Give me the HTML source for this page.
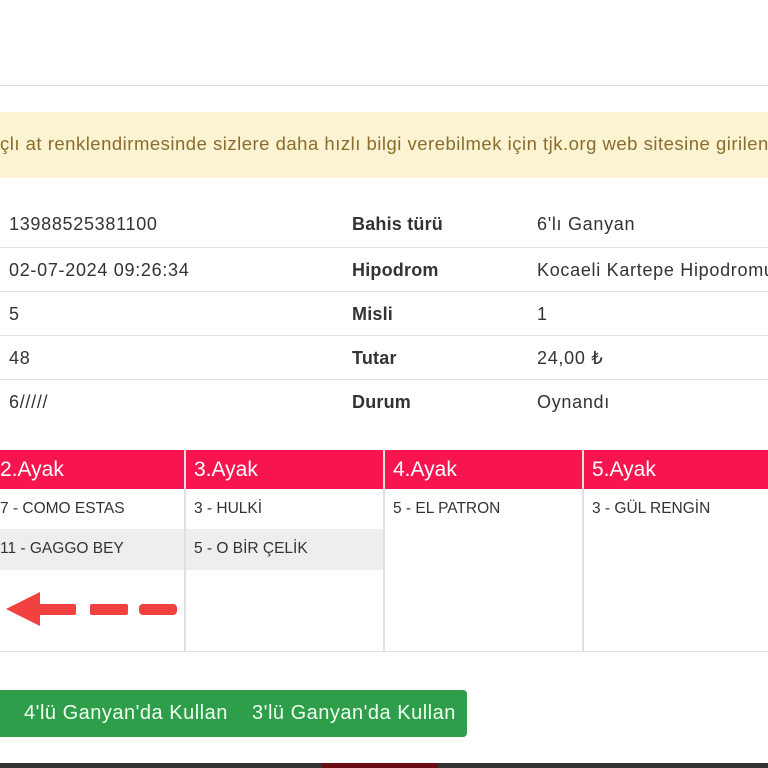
<!DOCTYPE html>
<html><head><meta charset="utf-8"><style>
body{margin:0;width:768px;height:768px;overflow:hidden;background:#fff;font-family:"Liberation Sans",sans-serif;position:relative;color:#333}
.a{position:absolute}
.row{position:absolute;left:0;width:768px;border-top:1px solid #e2e2e2;height:44px}
.row span{position:absolute;top:12px;font-size:18px;color:#333;white-space:nowrap;letter-spacing:0.7px}
.b{font-weight:bold;letter-spacing:0.2px!important}
.col{position:absolute;top:450px;height:201px;border-right:2px solid #e0e0e0}
.hd{height:39px;background:#f8154f;color:#fff;font-size:21px;line-height:39px;padding-left:8px;white-space:nowrap;overflow:hidden}
.it{height:40px;line-height:40px;font-size:15.5px;padding-left:8px;color:#333;white-space:nowrap;overflow:hidden}
</style></head><body>
<div class="a" style="left:0;top:85px;width:768px;height:1px;background:#ddd"></div>
<div class="a" style="left:0;top:112px;width:768px;height:66px;background:#fcf3d2"></div>
<div class="a" style="left:0;top:133px;font-size:18.5px;letter-spacing:0.5px;color:#8a6d2e;white-space:nowrap">çlı at renklendirmesinde sizlere daha hızlı bilgi verebilmek için tjk.org web sitesine girilen</div>
<div class="row" style="top:202px;border-top:none"><span style="left:9px">13988525381100</span><span class="b" style="left:352px">Bahis türü</span><span style="left:537px">6'lı Ganyan</span></div>
<div class="row" style="top:247px"><span style="left:9px">02-07-2024 09:26:34</span><span class="b" style="left:352px">Hipodrom</span><span style="left:537px">Kocaeli Kartepe Hipodromu</span></div>
<div class="row" style="top:291px"><span style="left:9px">5</span><span class="b" style="left:352px">Misli</span><span style="left:537px">1</span></div>
<div class="row" style="top:335px"><span style="left:9px">48</span><span class="b" style="left:352px">Tutar</span><span style="left:537px">24,00 ₺</span></div>
<div class="row" style="top:379px"><span style="left:9px">6/////</span><span class="b" style="left:352px">Durum</span><span style="left:537px">Oynandı</span></div>
<div class="col" style="left:0;width:184px"><div class="hd" style="padding-left:0">2.Ayak</div><div class="it" style="padding-left:0">7 - COMO ESTAS</div><div class="it" style="background:#eee;padding-left:0;height:41px">11 - GAGGO BEY</div></div>
<div class="col" style="left:186px;width:197px"><div class="hd">3.Ayak</div><div class="it">3 - HULKİ</div><div class="it" style="background:#eee;height:41px">5 - O BİR ÇELİK</div></div>
<div class="col" style="left:385px;width:197px"><div class="hd">4.Ayak</div><div class="it">5 - EL PATRON</div></div>
<div class="col" style="left:584px;width:184px;border-right:none"><div class="hd">5.Ayak</div><div class="it">3 - GÜL RENGİN</div></div>
<div class="a" style="left:0;top:651px;width:768px;height:1px;background:#e0e0e0"></div>
<svg class="a" style="left:0;top:585px" width="185" height="45"><g fill="#f04040"><polygon points="6,24 40,7 40,41"/><rect x="38" y="19" width="38" height="11" rx="2"/><rect x="90" y="19" width="38" height="11" rx="2"/><rect x="139" y="19" width="38" height="11" rx="4"/></g></svg>
<div class="a" style="left:0;top:690px;width:467px;height:47px;background:#2f9e4b;border-radius:0 4px 4px 0"></div>
<div class="a" style="left:24px;top:702px;font-size:20px;letter-spacing:0.5px;color:#f0fff0;white-space:nowrap">4'lü Ganyan'da Kullan</div>
<div class="a" style="left:252px;top:702px;font-size:20px;letter-spacing:0.5px;color:#f0fff0;white-space:nowrap">3'lü Ganyan'da Kullan</div>
<div class="a" style="left:0;top:763px;width:768px;height:5px;background:#333"></div>
<div class="a" style="left:322px;top:763px;width:116px;height:5px;background:#6a0c14"></div>
</body></html>
